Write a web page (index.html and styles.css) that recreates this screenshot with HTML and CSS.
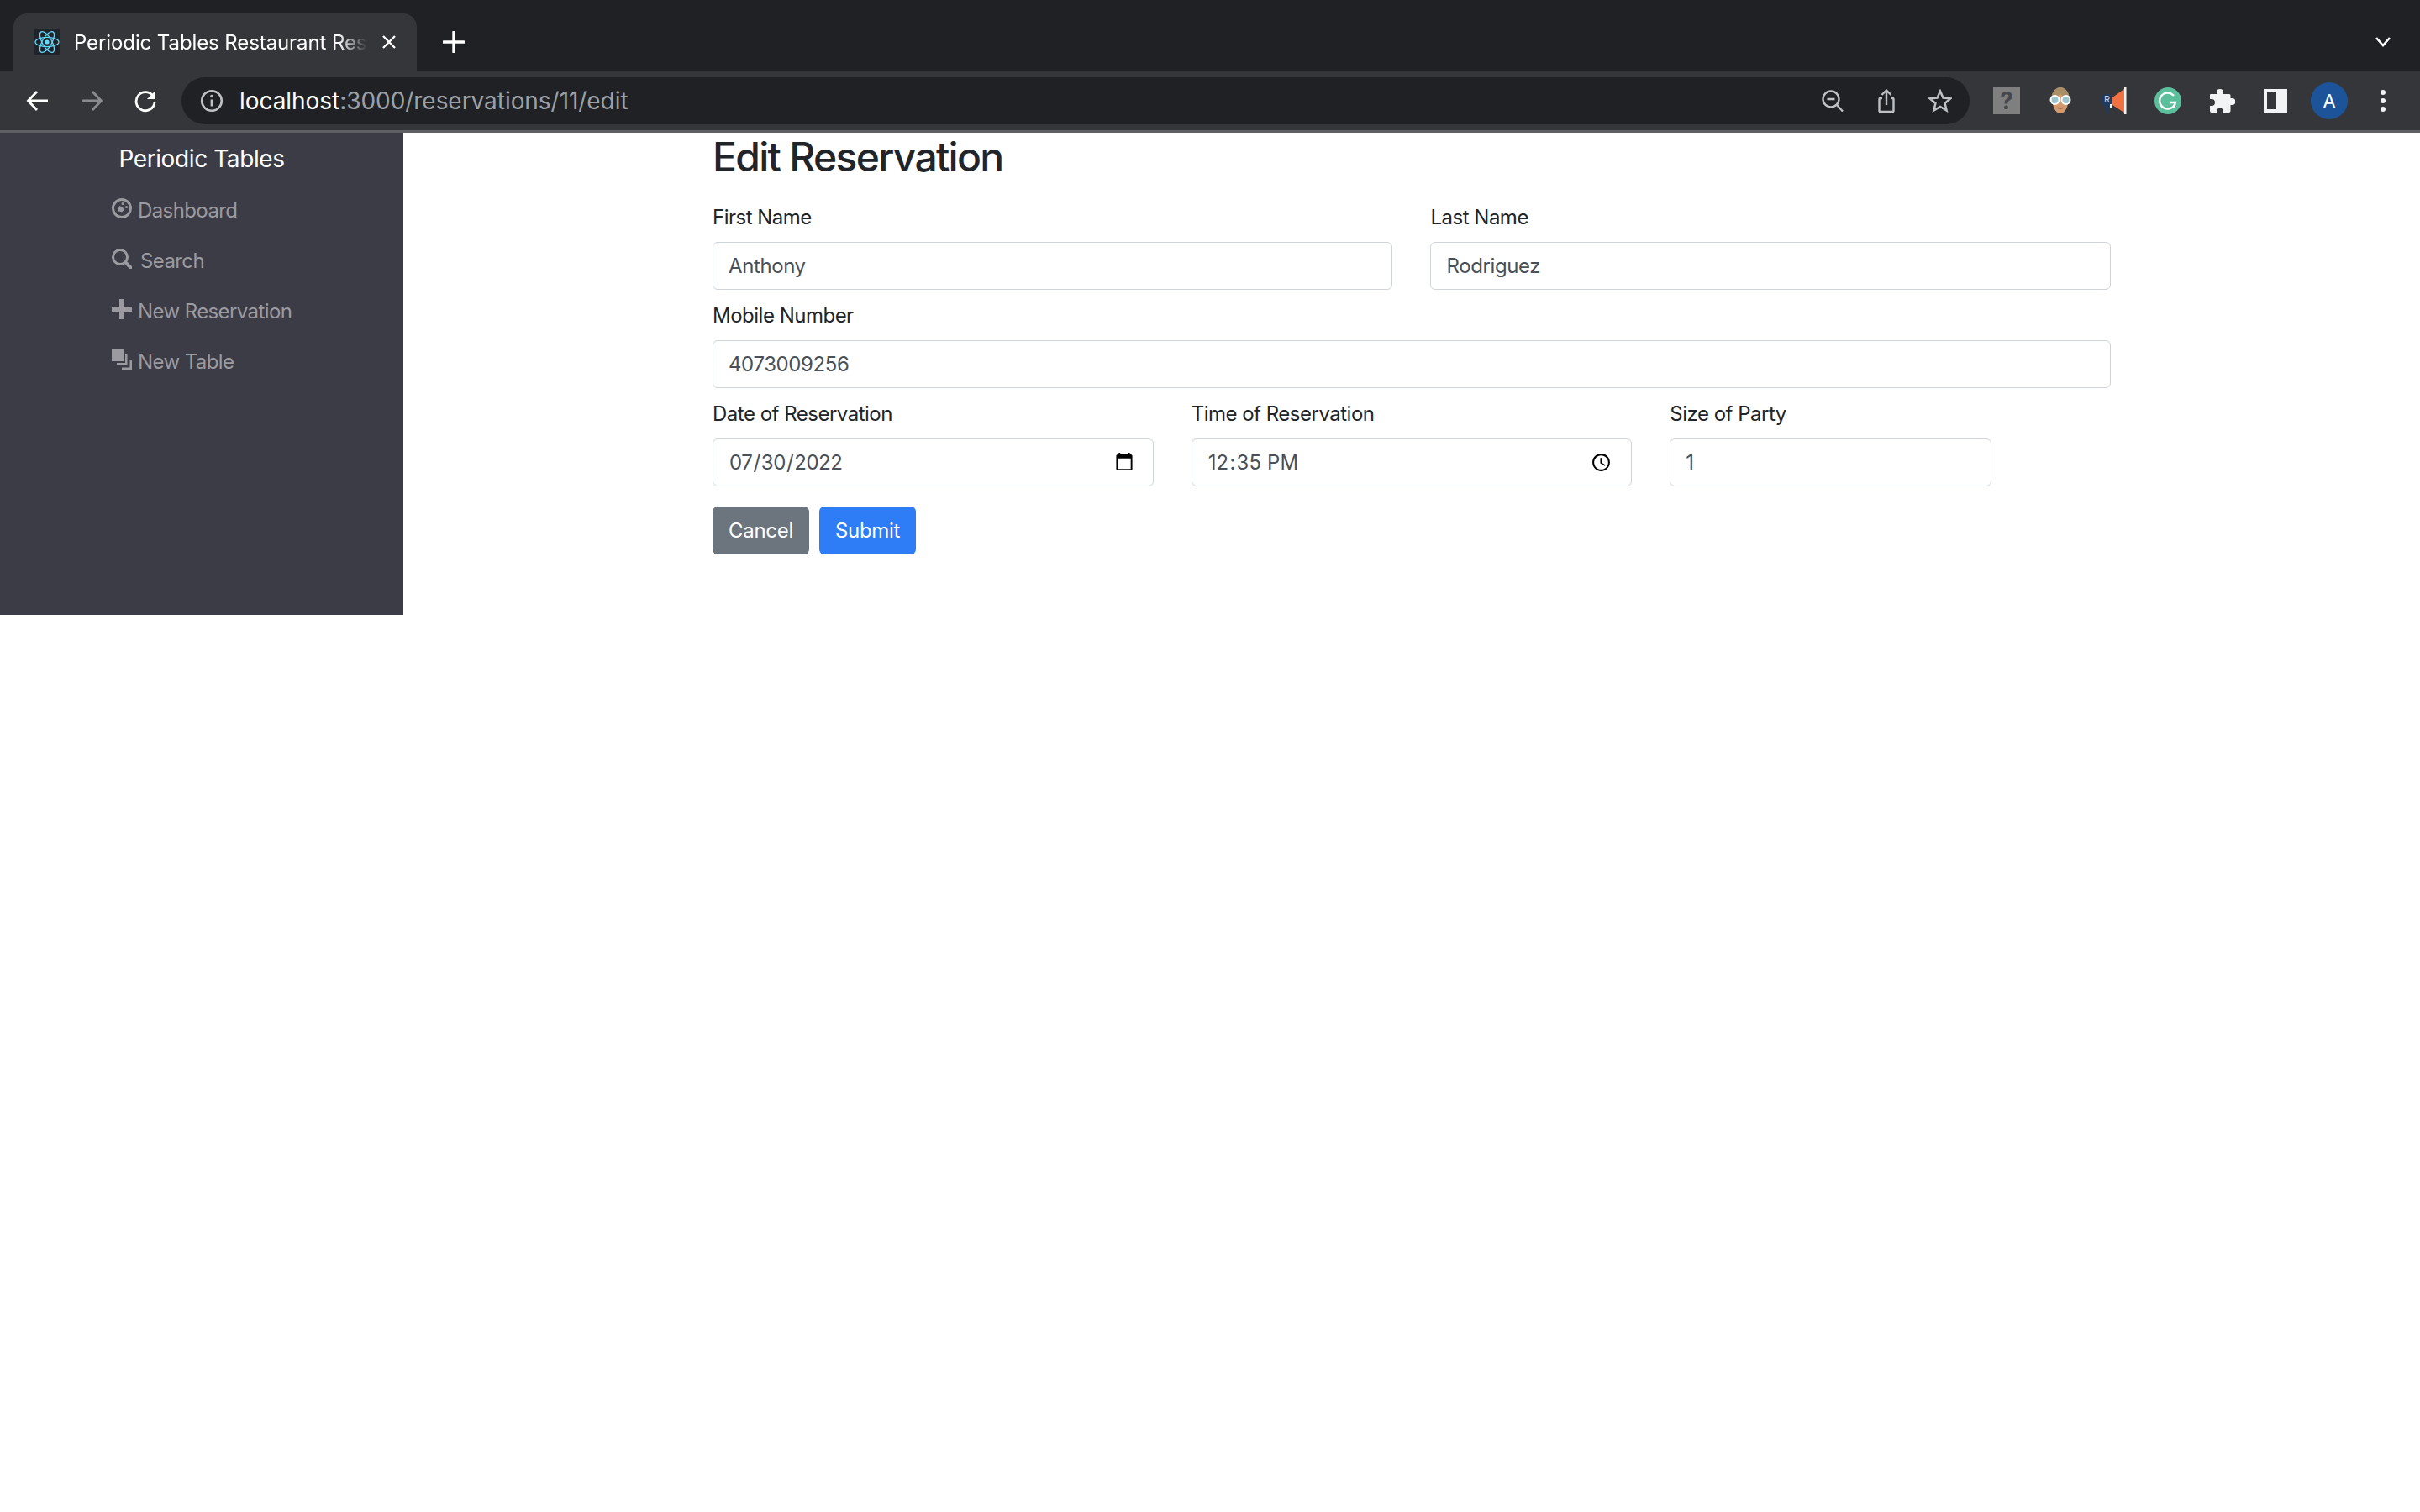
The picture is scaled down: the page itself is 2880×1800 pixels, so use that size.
FILE: index.html
```html
<!DOCTYPE html>
<html lang="en">

<head>
    <meta charset="UTF-8">
    <meta name="viewport" content="width=device-width, initial-scale=1.0">
    <title>Periodic Tables Restaurant Reservation</title>
    <link rel="stylesheet" href="styles.css">
</head>

<body>
    <div class="tabstrip">
        <div class="tab">
            <svg class="favicon" viewBox="0 0 32 32">
                <rect width="32" height="32" rx="3" fill="#20232a" />
                <g fill="none" stroke="#61dafb" stroke-width="1.3">
                    <ellipse cx="16" cy="16" rx="14" ry="5.6" />
                    <ellipse cx="16" cy="16" rx="14" ry="5.6" transform="rotate(60 16 16)" />
                    <ellipse cx="16" cy="16" rx="14" ry="5.6" transform="rotate(120 16 16)" />
                </g>
                <circle cx="16" cy="16" r="2.6" fill="#61dafb" />
            </svg>
            <span class="tab-title">Periodic Tables Restaurant Reservation</span>
            <svg class="tab-close" viewBox="0 0 20 20">
                <path d="M3 3l14 14M17 3L3 17" stroke="#fff" stroke-width="2.4" />
            </svg>
        </div>
        <svg class="new-tab" viewBox="0 0 26 26">
            <path d="M13 1v24M1 13h24" stroke="#fff" stroke-width="3.4" stroke-linecap="round" />
        </svg>
        <svg class="tab-list" viewBox="0 0 20 14">
            <path d="M2 2l8 9 8-9" fill="none" stroke="#fff" stroke-width="2.6" />
        </svg>
    </div>

    <div class="toolbar">
        <div class="tool">
            <svg class="icon" viewBox="0 0 28 28">
                <path d="M26 14H3M13 3L2.500 14 13 25" fill="none" stroke="#fff" stroke-width="2.800" />
            </svg>
        </div>
        <div class="tool">
            <svg class="icon" viewBox="0 0 28 28">
                <path d="M2 14h23M15 3l10.500 11L15 25" fill="none" stroke="#8b8c8e" stroke-width="2.800" />
            </svg>
        </div>
        <div class="tool">
            <svg class="icon" viewBox="0 0 28 28">
                <path d="M23.500 9A11 11 0 1 0 25 16" fill="none" stroke="#fff" stroke-width="2.800" />
                <path d="M26 2v10H16z" fill="#fff" />
            </svg>
        </div>
        <div class="omnibox">
            <svg class="info" viewBox="0 0 28 28">
                <circle cx="14" cy="14" r="11.800" fill="none" stroke="#bdc1c6" stroke-width="2.600" />
                <path d="M14 12.500v8" stroke="#bdc1c6" stroke-width="2.800" />
                <circle cx="14" cy="8.500" r="1.800" fill="#bdc1c6" />
            </svg>
            <div class="url">localhost<span class="url-rest">:3000/reservations/11/edit</span></div>
            <div class="tool">
                <svg class="icon" viewBox="0 0 28 28">
                    <circle cx="12" cy="12" r="9.500" fill="none" stroke="#bdc1c6" stroke-width="2.400" />
                    <path d="M7.500 12h9M19 19l7 7.500" stroke="#bdc1c6" stroke-width="2.400" />
                </svg>
            </div>
            <div class="tool">
                <svg class="icon" viewBox="0 0 28 28">
                    <path d="M9 11H6.500a1 1 0 0 0-1 1v14a1 1 0 0 0 1 1h15a1 1 0 0 0 1-1V12a1 1 0 0 0-1-1H19" fill="none" stroke="#bdc1c6" stroke-width="2.400" />
                    <path d="M14 19V2M8.500 7L14 1.500 19.500 7" fill="none" stroke="#bdc1c6" stroke-width="2.400" />
                </svg>
            </div>
            <div class="tool">
                <svg class="icon" viewBox="0 0 28 28">
                    <path d="M14 2.500l3.500 8 8.700.8-6.600 5.700 2 8.500-7.600-4.500-7.600 4.500 2-8.500-6.600-5.700 8.700-.8z" fill="none" stroke="#bdc1c6" stroke-width="2.500" />
                </svg>
            </div>
        </div>
        <div class="extensions">
            <div class="tool">
                <div class="ext-help">?</div>
            </div>
            <div class="tool">
                <svg class="ext-icon" viewBox="0 0 32 32">
                    <path d="M6 20C3 8 9 0 16 0s13 8 10 20z" fill="#a98f68" />
                    <path d="M7 14c2-1 6-3 9-7 2 4 6 6 9 7 1 8-3 17-9 17S6 22 7 14z" fill="#d49a6d" />
                    <circle cx="9.500" cy="15" r="5" fill="#9dc4cf" stroke="#fff" stroke-width="2" />
                    <circle cx="22.500" cy="15" r="5" fill="#9dc4cf" stroke="#fff" stroke-width="2" />
                    <path d="M12.500 24c2 1.500 5 1.500 7 0" fill="none" stroke="#9c5f3f" stroke-width="1.400" />
                </svg>
            </div>
            <div class="tool">
                <svg class="ext-icon" viewBox="0 0 32 32">
                    <path d="M1 15a7 7 0 0 1 9-7l3 2v10l-3 3-1 9H7l-1-9c-3-1-5-4-5-8z" fill="#1f3a5f" />
                    <path d="M14 12L28 2v28L14 21z" fill="#f07242" />
                    <rect x="28" width="2.500" height="32" fill="#f1f3f4" />
                    <rect x="11" y="20" width="3" height="4" fill="#f1f3f4" />
                    <text class="ext-letter" x="4" y="18">R</text>
                </svg>
            </div>
            <div class="tool">
                <svg class="ext-icon" viewBox="0 0 32 32">
                    <circle cx="16" cy="16" r="16" fill="#5bbf9c" />
                    <path d="M23 10A9.500 9.500 0 1 0 25 18H18" fill="none" stroke="#fff" stroke-width="2.400" />
                    <path d="M25 18v6h-5z" fill="#fff" />
                </svg>
            </div>
            <div class="tool">
                <svg class="ext-icon" viewBox="0 0 32 32">
                    <path d="M3 8h7V6a4 4 0 0 1 8 0v2h7a1.500 1.500 0 0 1 1.500 1.500V13h2a4 4 0 0 1 0 8h-2v7a2 2 0 0 1-2 2h-7v-2a3.500 3.500 0 0 0-7 0v2H4a2 2 0 0 1-2-2v-6h2a4 4 0 0 0 0-8H2V9a1 1 0 0 1 1-1z" fill="#f1f3f4" />
                </svg>
            </div>
            <div class="tool">
                <div class="ext-panel"></div>
            </div>
            <div class="tool">
                <div class="avatar">A</div>
            </div>
            <div class="tool">
                <svg class="dots" viewBox="0 0 6 28">
                    <circle cx="3" cy="4" r="3" fill="#f1f3f4" />
                    <circle cx="3" cy="14" r="3" fill="#f1f3f4" />
                    <circle cx="3" cy="24" r="3" fill="#f1f3f4" />
                </svg>
            </div>
        </div>
    </div>

    <div class="page">
        <nav class="sidebar">
            <div class="brand">Periodic Tables</div>
            <ul class="nav-list">
                <li class="nav-item">
                    <svg class="nav-icon" viewBox="0 0 24 24">
                        <path fill-rule="evenodd" d="M12 0a12 12 0 1 1 0 24 12 12 0 0 1 0-24zm0 3a9 9 0 1 0 0 18 9 9 0 0 0 0-18z" fill="#9a9aa0" />
                        <path d="M7 16l2-7 4 1.500 1.500 3.500-2.500 2.500-3-1z" fill="#9a9aa0" />
                        <circle cx="13" cy="6.500" r="1.500" fill="#9a9aa0" />
                        <circle cx="17.500" cy="10.500" r="1.500" fill="#9a9aa0" />
                    </svg>
                    <span>Dashboard</span>
                </li>
                <li class="nav-item">
                    <svg class="nav-icon" viewBox="0 0 24 24">
                        <circle cx="10" cy="10" r="8.500" fill="none" stroke="#9a9aa0" stroke-width="3" />
                        <path d="M16.500 16.500l6 6" stroke="#9a9aa0" stroke-width="4" stroke-linecap="round" />
                    </svg>
                    <span class="nav-search">Search</span>
                </li>
                <li class="nav-item">
                    <svg class="nav-icon" viewBox="0 0 24 24">
                        <path d="M9 0h6v9h9v6h-9v9H9v-9H0V9h9z" fill="#9a9aa0" />
                    </svg>
                    <span>New Reservation</span>
                </li>
                <li class="nav-item">
                    <svg class="nav-icon" viewBox="0 0 24 24">
                        <rect width="14" height="14" fill="#9a9aa0" />
                        <path d="M6 16h10V6h2.500v12.500H6zM12 21.500h9.500V12H24v12H12z" fill="#9a9aa0" />
                    </svg>
                    <span>New Table</span>
                </li>
            </ul>
        </nav>

        <main class="content">
            <h2 class="heading">Edit Reservation</h2>
            <form class="form-grid">
                <div class="col-6">
                    <label class="field-label" for="first_name">First Name</label>
                    <input class="field" id="first_name" type="text" value="Anthony">
                </div>
                <div class="col-6">
                    <label class="field-label" for="last_name">Last Name</label>
                    <input class="field" id="last_name" type="text" value="Rodriguez">
                </div>
                <div class="col-12">
                    <label class="field-label" for="mobile_number">Mobile Number</label>
                    <input class="field" id="mobile_number" type="text" value="4073009256">
                </div>
                <div class="col-4">
                    <label class="field-label" for="reservation_date">Date of Reservation</label>
                    <input class="field field-picker" id="reservation_date" type="date" value="2022-07-30">
                </div>
                <div class="col-4">
                    <label class="field-label" for="reservation_time">Time of Reservation</label>
                    <input class="field field-picker field-time" id="reservation_time" type="time" value="12:35">
                </div>
                <div class="col-3">
                    <label class="field-label" for="people">Size of Party</label>
                    <input class="field" id="people" type="text" value="1">
                </div>
            </form>
            <div class="actions">
                <button class="btn btn-cancel" type="button">Cancel</button>
                <button class="btn btn-submit" type="submit">Submit</button>
            </div>
        </main>
    </div>
</body>

</html>
```

FILE: styles.css
```css
* {
    box-sizing: border-box;
}

body {
    margin: 0;
    background: white;
    font-family: Inter, "Liberation Sans", sans-serif;
    font-size: 24px;
    color: #212529;
}

/* browser chrome */
.tabstrip {
    display: flex;
    align-items: flex-end;
    height: 84px;
    padding-left: 16px;
    padding-right: 34px;
    background-color: #202124;
}

.tab {
    display: flex;
    align-items: center;
    width: 480px;
    height: 68px;
    padding: 0 23px 0 24px;
    background-color: #35363a;
    border-radius: 16px 16px 0 0;
}

.favicon {
    width: 32px;
    height: 32px;
    flex-shrink: 0;
}

.tab-title {
    flex: 1;
    margin-left: 16px;
    overflow: hidden;
    white-space: nowrap;
    font-size: 24px;
    letter-spacing: -0.1px;
    color: white;
    -webkit-mask-image: linear-gradient(to right, black 90%, transparent 100%);
    mask-image: linear-gradient(to right, black 90%, transparent 100%);
}

.tab-close {
    width: 20px;
    height: 20px;
    margin-left: 16px;
    flex-shrink: 0;
}

.new-tab {
    width: 26px;
    height: 26px;
    margin-left: 31px;
    margin-bottom: 21px;
}

.tab-list {
    width: 20px;
    height: 14px;
    margin-left: auto;
    margin-bottom: 27px;
}

.toolbar {
    display: flex;
    align-items: center;
    height: 74px;
    padding-top: 1px;
    padding-left: 13px;
    padding-right: 12px;
    background-color: #35363a;
    border-bottom: 3px solid #5f6064;
}

.tool {
    display: flex;
    align-items: center;
    justify-content: center;
    width: 64px;
    height: 56px;
    flex-shrink: 0;
}

.icon {
    width: 28px;
    height: 28px;
}

.omnibox {
    display: flex;
    align-items: center;
    flex: 1;
    height: 56px;
    margin-left: 11px;
    margin-right: 12px;
    padding-left: 22px;
    padding-right: 3px;
    background-color: #202124;
    border-radius: 28px;
}

.info {
    width: 28px;
    height: 28px;
}

.url {
    flex: 1;
    margin-left: 19px;
    font-size: 28px;
    letter-spacing: -0.05px;
    color: white;
}

.url-rest {
    color: #9aa0a6;
}

.extensions {
    display: flex;
    align-items: center;
}

.ext-icon {
    width: 32px;
    height: 32px;
}

.ext-help {
    width: 32px;
    height: 32px;
    background-color: #7f7f7f;
    font-size: 28px;
    font-weight: 700;
    line-height: 32px;
    text-align: center;
    color: #47484b;
}

.ext-letter {
    font-size: 11px;
    fill: #c9ced6;
}

.ext-panel {
    width: 28px;
    height: 28px;
    border: 4px solid #f1f3f4;
    border-right-width: 13px;
}

.avatar {
    width: 44px;
    height: 44px;
    background-color: #1d5499;
    border-radius: 50%;
    font-size: 22px;
    line-height: 44px;
    text-align: center;
    color: white;
}

.dots {
    width: 6px;
    height: 28px;
}

/* app */
.page {
    display: flex;
    align-items: flex-start;
}

.sidebar {
    width: 480px;
    height: 574px;
    flex-shrink: 0;
    background-color: #3c3c46;
}

.brand {
    padding-top: 9px;
    font-size: 28px;
    letter-spacing: -0.4px;
    line-height: 44px;
    text-align: center;
    color: white;
}

.nav-list {
    margin: 0;
    padding: 9px 0 0 133px;
    list-style: none;
}

.nav-item {
    display: flex;
    align-items: center;
    height: 60px;
    letter-spacing: -0.6px;
    color: #9a9aa0;
}

.nav-icon {
    width: 24px;
    height: 24px;
    margin-right: 7px;
    margin-top: -4px;
    flex-shrink: 0;
}

.nav-search {
    margin-left: 3px;
}

.content {
    flex: 1;
    padding: 0 368px;
}

.heading {
    margin: 0 0 24px;
    font-size: 48px;
    font-weight: 500;
    letter-spacing: -1.7px;
    line-height: 1.2;
}

.form-grid {
    display: grid;
    grid-template-columns: repeat(12, 1fr);
    gap: 12px 45px;
}

.col-12 {
    grid-column: span 12;
}

.col-6 {
    grid-column: span 6;
}

.col-4 {
    grid-column: span 4;
}

.col-3 {
    grid-column: span 3;
}

.field-label {
    display: block;
    margin-bottom: 11px;
    padding-top: 1px;
    letter-spacing: -0.5px;
    line-height: 36px;
}

.field {
    display: block;
    width: 100%;
    height: 57px;
    padding: 9px 18px;
    background: white;
    border: 1.5px solid #ced4da;
    border-radius: 6px;
    font-family: inherit;
    font-size: 24px;
    letter-spacing: -0.4px;
    color: #495057;
}

.field-picker {
    padding-right: 20px;
}

.field-time {
    letter-spacing: 0.2px;
}

.actions {
    display: flex;
    gap: 12px;
    margin-top: 24px;
}

.btn {
    height: 57px;
    padding: 0 19px;
    border: none;
    border-radius: 6px;
    font-family: inherit;
    font-size: 24px;
    letter-spacing: -0.3px;
    color: white;
}

.btn-cancel {
    background-color: #6c757d;
}

.btn-submit {
    background-color: #2f7df6;
}
```
